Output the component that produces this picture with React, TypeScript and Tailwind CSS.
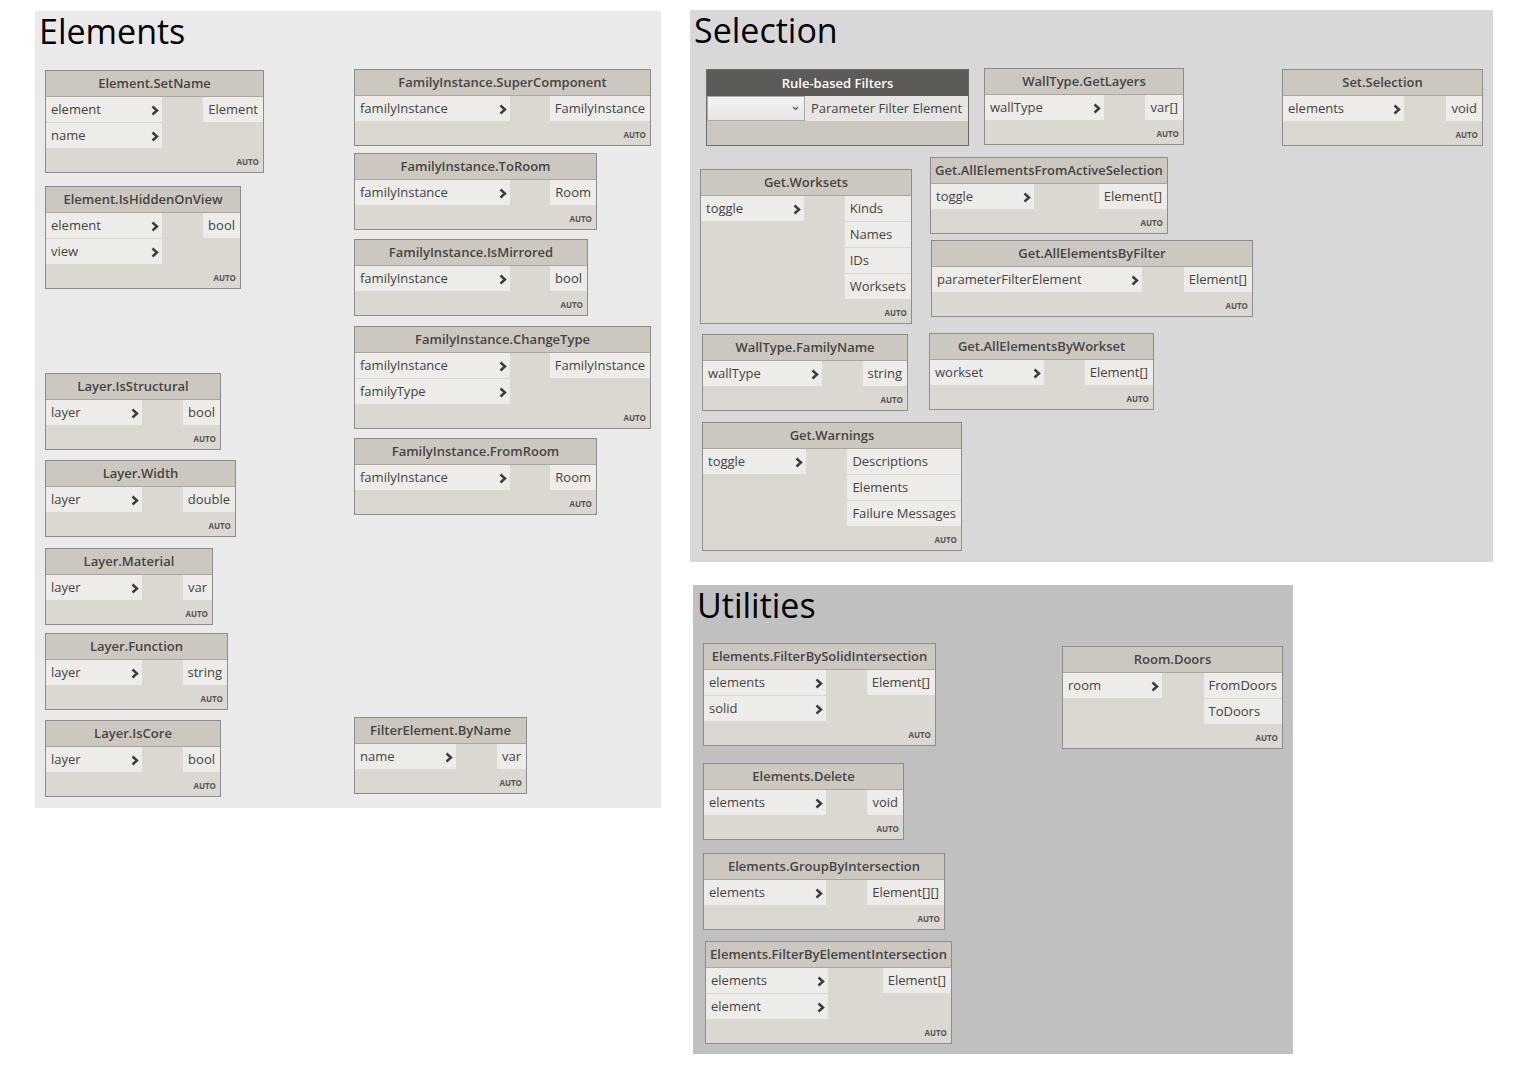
type NodeSpec = {
  title: string
  box: string
  inW: string
  inputs: string[]
  outputs: string[]
}

const nodes: NodeSpec[] = [
  // Elements
  { title: 'Element.SetName', box: 'left-[45px] top-[70px] w-[219px]', inW: 'w-[116px]', inputs: ['element', 'name'], outputs: ['Element'] },
  { title: 'Element.IsHiddenOnView', box: 'left-[45px] top-[186px] w-[196px]', inW: 'w-[116px]', inputs: ['element', 'view'], outputs: ['bool'] },
  { title: 'Layer.IsStructural', box: 'left-[45px] top-[373px] w-[176px]', inW: 'w-[96px]', inputs: ['layer'], outputs: ['bool'] },
  { title: 'Layer.Width', box: 'left-[45px] top-[460px] w-[191px]', inW: 'w-[96px]', inputs: ['layer'], outputs: ['double'] },
  { title: 'Layer.Material', box: 'left-[45px] top-[548px] w-[168px]', inW: 'w-[96px]', inputs: ['layer'], outputs: ['var'] },
  { title: 'Layer.Function', box: 'left-[45px] top-[633px] w-[183px]', inW: 'w-[96px]', inputs: ['layer'], outputs: ['string'] },
  { title: 'Layer.IsCore', box: 'left-[45px] top-[720px] w-[176px]', inW: 'w-[96px]', inputs: ['layer'], outputs: ['bool'] },
  { title: 'FamilyInstance.SuperComponent', box: 'left-[354px] top-[69px] w-[297px]', inW: 'w-[155px]', inputs: ['familyInstance'], outputs: ['FamilyInstance'] },
  { title: 'FamilyInstance.ToRoom', box: 'left-[354px] top-[153px] w-[243px]', inW: 'w-[155px]', inputs: ['familyInstance'], outputs: ['Room'] },
  { title: 'FamilyInstance.IsMirrored', box: 'left-[354px] top-[239px] w-[234px]', inW: 'w-[155px]', inputs: ['familyInstance'], outputs: ['bool'] },
  { title: 'FamilyInstance.ChangeType', box: 'left-[354px] top-[326px] w-[297px]', inW: 'w-[155px]', inputs: ['familyInstance', 'familyType'], outputs: ['FamilyInstance'] },
  { title: 'FamilyInstance.FromRoom', box: 'left-[354px] top-[438px] w-[243px]', inW: 'w-[155px]', inputs: ['familyInstance'], outputs: ['Room'] },
  { title: 'FilterElement.ByName', box: 'left-[354px] top-[717px] w-[173px]', inW: 'w-[101px]', inputs: ['name'], outputs: ['var'] },
  // Selection
  { title: 'WallType.GetLayers', box: 'left-[984px] top-[68px] w-[200px]', inW: 'w-[119px]', inputs: ['wallType'], outputs: ['var[]'] },
  { title: 'Set.Selection', box: 'left-[1282px] top-[69px] w-[201px]', inW: 'w-[121px]', inputs: ['elements'], outputs: ['void'] },
  { title: 'Get.Worksets', box: 'left-[700px] top-[169px] w-[212px]', inW: 'w-[103px]', inputs: ['toggle'], outputs: ['Kinds', 'Names', 'IDs', 'Worksets'] },
  { title: 'Get.AllElementsFromActiveSelection', box: 'left-[930px] top-[157px] w-[238px]', inW: 'w-[103px]', inputs: ['toggle'], outputs: ['Element[]'] },
  { title: 'Get.AllElementsByFilter', box: 'left-[931px] top-[240px] w-[322px]', inW: 'w-[210px]', inputs: ['parameterFilterElement'], outputs: ['Element[]'] },
  { title: 'WallType.FamilyName', box: 'left-[702px] top-[334px] w-[206px]', inW: 'w-[119px]', inputs: ['wallType'], outputs: ['string'] },
  { title: 'Get.AllElementsByWorkset', box: 'left-[929px] top-[333px] w-[225px]', inW: 'w-[114px]', inputs: ['workset'], outputs: ['Element[]'] },
  { title: 'Get.Warnings', box: 'left-[702px] top-[422px] w-[260px]', inW: 'w-[103px]', inputs: ['toggle'], outputs: ['Descriptions', 'Elements', 'Failure Messages'] },
  // Utilities
  { title: 'Elements.FilterBySolidIntersection', box: 'left-[703px] top-[643px] w-[233px]', inW: 'w-[122px]', inputs: ['elements', 'solid'], outputs: ['Element[]'] },
  { title: 'Room.Doors', box: 'left-[1062px] top-[646px] w-[221px]', inW: 'w-[99px]', inputs: ['room'], outputs: ['FromDoors', 'ToDoors'] },
  { title: 'Elements.Delete', box: 'left-[703px] top-[763px] w-[201px]', inW: 'w-[122px]', inputs: ['elements'], outputs: ['void'] },
  { title: 'Elements.GroupByIntersection', box: 'left-[703px] top-[853px] w-[242px]', inW: 'w-[122px]', inputs: ['elements'], outputs: ['Element[][]'] },
  { title: 'Elements.FilterByElementIntersection', box: 'left-[705px] top-[941px] w-[247px]', inW: 'w-[122px]', inputs: ['elements', 'element'], outputs: ['Element[]'] },
]

function Chevron() {
  return (
    <svg width="8" height="11" viewBox="0 0 8 11" aria-hidden="true">
      <path d="M1.5 1.5 L6 5.5 L1.5 9.5" fill="none" stroke="#3a3a3a" strokeWidth="2.4" />
    </svg>
  )
}

function NodeBox({ n }: { n: NodeSpec }) {
  return (
    <div className={`absolute ${n.box} border border-[#8c8c8c] bg-[#dbd8d2] text-[#444]`}>
      <div className="flex h-[26px] items-center justify-center whitespace-nowrap border-b border-[#aaa59e] bg-[#ccc8c0] pt-px text-[13px] font-semibold">
        {n.title}
      </div>
      <div className="flex justify-between text-[13px]">
        <div className={`flex ${n.inW} flex-col gap-px`}>
          {n.inputs.map((p) => (
            <div key={p} className="flex h-[25px] items-center justify-between bg-[#edece8] pl-[5px] pr-[3px] pt-px">
              <span>{p}</span>
              <Chevron />
            </div>
          ))}
        </div>
        <div className="flex flex-col gap-px">
          {n.outputs.map((p) => (
            <div key={p} className="flex h-[25px] items-center justify-start whitespace-nowrap bg-[#edece8] px-[5px] pt-px">
              {p}
            </div>
          ))}
        </div>
      </div>
      <div className="flex h-[24px] items-center justify-end pr-[4px] pt-[3px] text-[8px] font-bold text-[#555]">
        AUTO
      </div>
    </div>
  )
}

function RuleFilters() {
  return (
    <div className="absolute left-[706px] top-[69px] w-[263px] border border-[#6b6b6b] bg-[#ccc7c0]">
      <div className="flex h-[26px] items-center justify-center bg-[#5d5b57] pt-px text-[13px] font-semibold text-white">
        Rule-based Filters
      </div>
      <div className="flex h-[25px] text-[13px]">
        <div className="flex w-[98px] items-center justify-end border border-[#acacac] bg-gradient-to-b from-[#f3f3f3] to-[#e5e5e5] pr-[5px]">
          <svg width="7" height="5" viewBox="0 0 7 5" aria-hidden="true">
            <path d="M1 1 L3.5 3.5 L6 1" fill="none" stroke="#555" strokeWidth="1.2" />
          </svg>
        </div>
        <div className="flex flex-1 items-center bg-[#e7e5e1] pl-[6px] pt-px text-[#444]">Parameter Filter Element</div>
      </div>
      <div className="h-[24px]" />
    </div>
  )
}

export default function App() {
  return (
    <div className="relative h-[1088px] w-[1520px] overflow-hidden bg-white font-['Open_Sans',sans-serif]">
      <div className="absolute left-[35px] top-[11px] h-[797px] w-[626px] bg-[#eaeaea]">
        <div className="pl-[4px] pt-[3px] text-[34px] leading-none text-black">Elements</div>
      </div>
      <div className="absolute left-[690px] top-[10px] h-[552px] w-[803px] bg-[#d8d8d8]">
        <div className="pl-[4px] pt-[3px] text-[34px] leading-none text-black">Selection</div>
      </div>
      <div className="absolute left-[693px] top-[585px] h-[469px] w-[600px] bg-[#c0c0c0]">
        <div className="pl-[4px] pt-[3px] text-[34px] leading-none text-black">Utilities</div>
      </div>
      {nodes.map((n) => (
        <NodeBox key={n.title} n={n} />
      ))}
      <RuleFilters />
    </div>
  )
}
